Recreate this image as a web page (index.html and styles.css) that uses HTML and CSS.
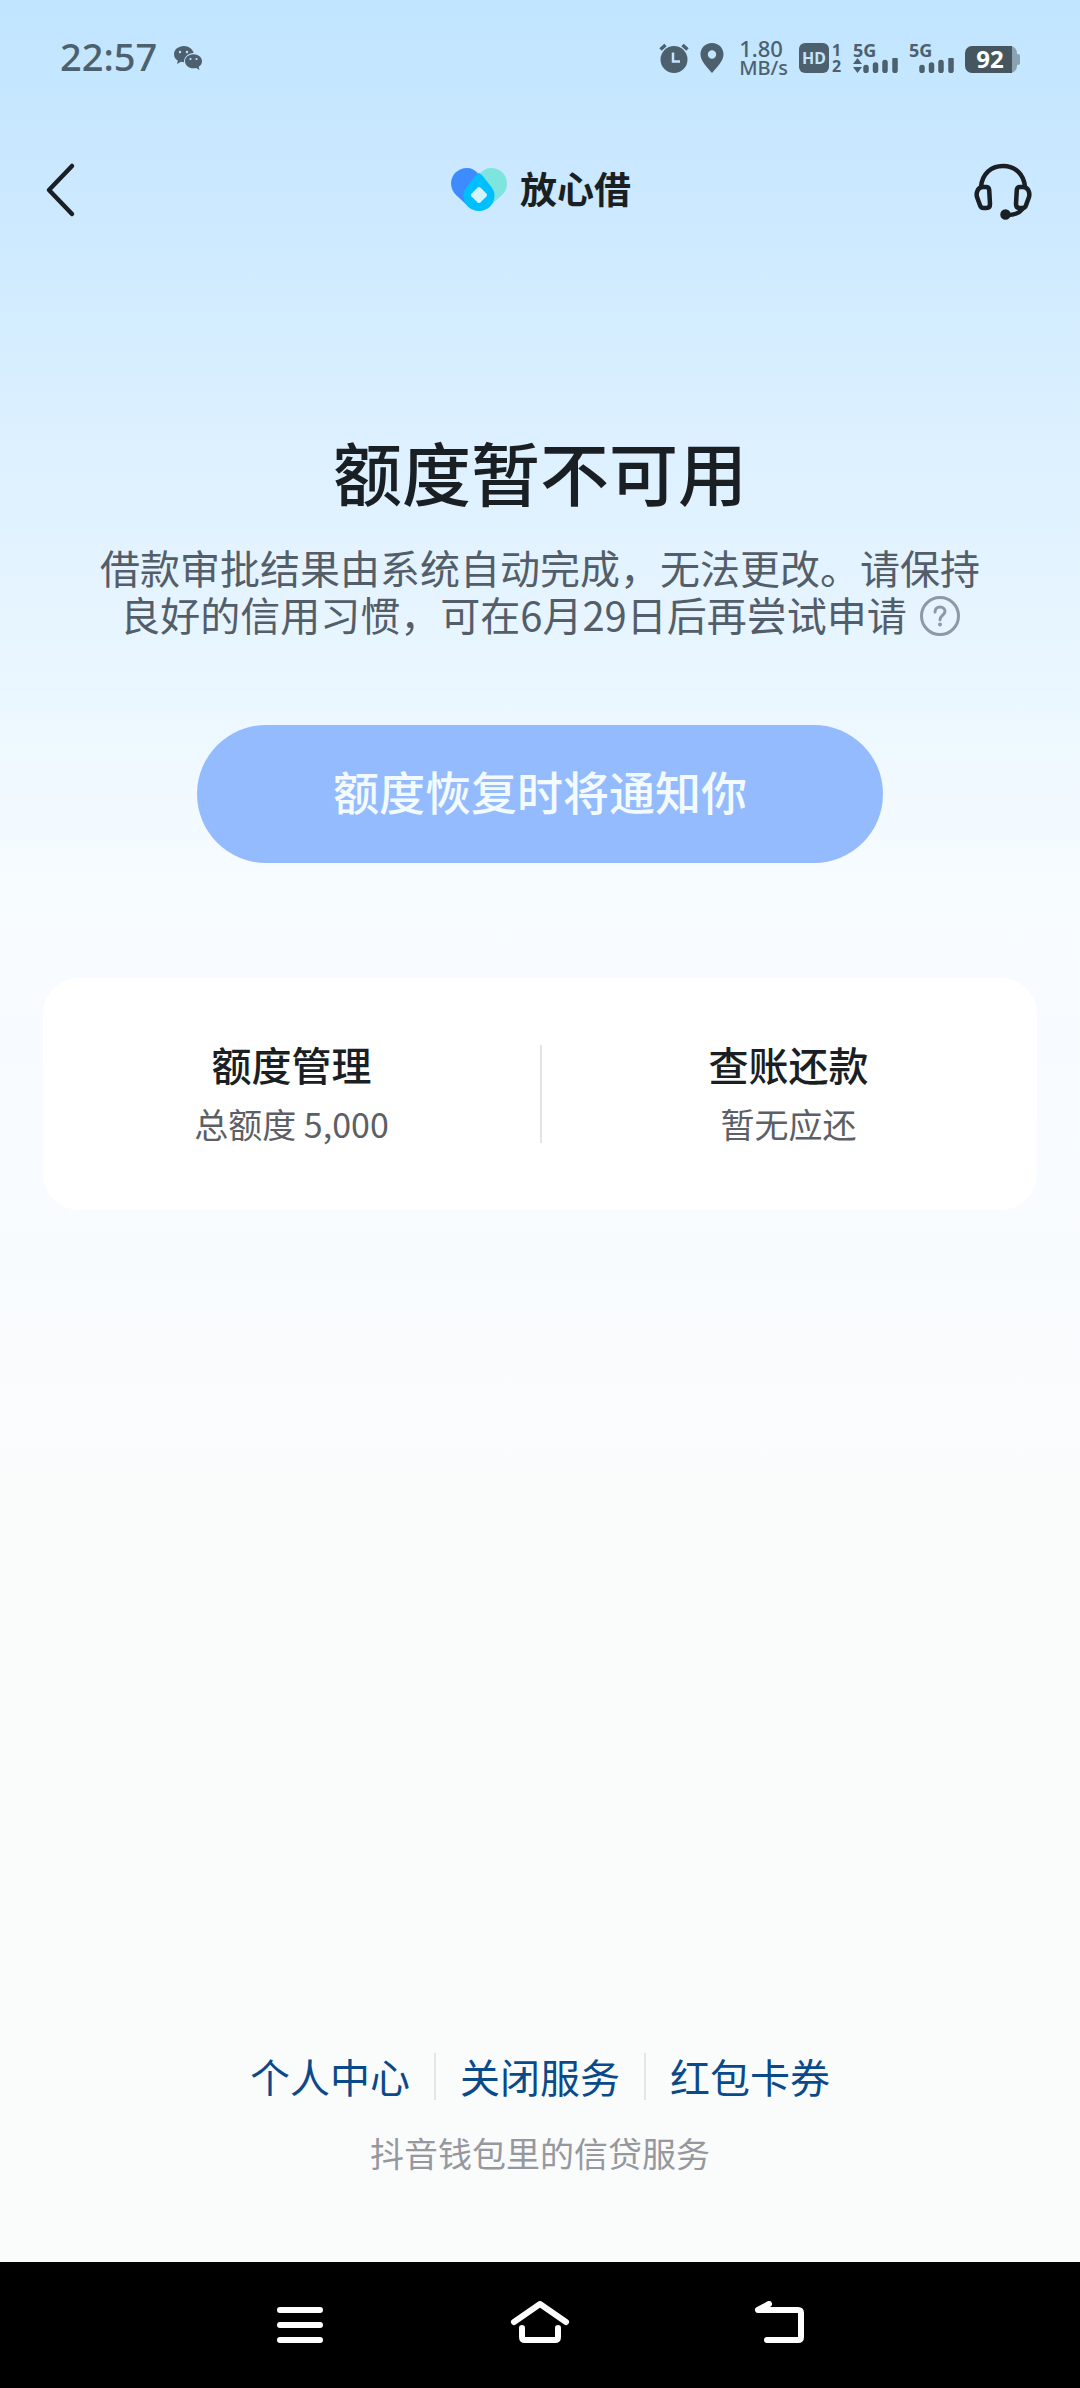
FILE: index.html
```html
<!DOCTYPE html>
<html lang="zh-CN">
<head>
<meta charset="utf-8">
<meta name="viewport" content="width=device-width, initial-scale=1">
<title>放心借</title>
<link rel="stylesheet" href="styles.css">
</head>
<body>
<div class="app">
  <div class="status">
    <div class="status-left">
      <span class="clock">22:57</span>
      <svg width="28" height="26" viewBox="0 0 28 26" aria-hidden="true">
        <path fill="currentColor" d="M10 1C4.500 1 0 4.600 0 9.200c0 2.700 1.500 5 3.800 6.400L3 19l4-2.200c1 .3 2 .4 3 .4C10 12 14 8 19.700 8 18.600 4 14.700 1 10 1z"/>
        <path fill="currentColor" d="M19.500 9.200c-4.800 0-8.500 3.100-8.500 7s3.700 7.100 8.500 7.100c1 0 2-.2 2.900-.4L25.500 25l-.8-3.200c2-1.300 3.300-3.300 3.300-5.600 0-3.900-3.700-7-8.500-7z"/>
        <g fill="#c5e5ff"><circle cx="6" cy="7" r="1.200"/><circle cx="13" cy="7" r="1.200"/><circle cx="16.500" cy="14" r="1.100"/><circle cx="22.500" cy="14" r="1.100"/></g>
      </svg>
    </div>
    <div class="status-right">
      <svg width="30" height="30" viewBox="0 0 30 30" aria-hidden="true">
        <circle cx="15" cy="16.500" r="13.500" fill="currentColor"/>
        <path d="M1.500 6.500L6.500 2M28.500 6.500L23.500 2" stroke="currentColor" stroke-width="3.500" fill="none"/>
        <path d="M14 9.500v9h7" stroke="#c5e5ff" stroke-width="2.500" fill="none"/>
      </svg>
      <svg width="24" height="30" viewBox="0 0 24 30" aria-hidden="true">
        <path fill="currentColor" fill-rule="evenodd" d="M12 0C5.200 0 .5 5 .5 11.300c0 7 7 13.500 11.500 18.700 4.500-5.200 11.500-11.700 11.500-18.700C23.500 5 18.800 0 12 0zm0 7.300a4.200 4.200 0 1 1 0 8.400 4.200 4.200 0 0 1 0-8.400z"/>
      </svg>
      <div class="speed"><span class="speed-value">1.80</span><span>MB/s</span></div>
      <div class="volte">
        <span class="hd">HD</span>
        <span class="sims"><span>1</span><span>2</span></span>
      </div>
      <div class="signal">
        <span class="net">5G</span>
        <svg width="45" height="15" viewBox="0 0 45 15" aria-hidden="true">
          <path fill="currentColor" d="M0 6l4.500-6L9 6zM0 9l4.500 6L9 9z"/>
          <path d="M13 9.500v3M22.500 7v5.500M32 4.500v8M42 1.500v11" stroke="currentColor" stroke-width="5.500" stroke-linecap="round"/>
        </svg>
      </div>
      <div class="signal">
        <span class="net">5G</span>
        <svg width="45" height="15" viewBox="0 0 45 15" aria-hidden="true">
          <path d="M13 9.500v3M22.500 7v5.500M32 4.500v8M42 1.500v11" stroke="currentColor" stroke-width="5.500" stroke-linecap="round"/>
        </svg>
      </div>
      <svg width="55" height="32" viewBox="0 -3 55 32">
        <rect x="2" y="1" width="50" height="27" rx="7" fill="#8ba2b2"/>
        <rect x="51" y="9" width="4" height="11" rx="2" fill="#8ba2b2"/>
        <path fill="#46565f" d="M7 1h40v27H7a7 7 0 0 1-7-7V8a7 7 0 0 1 7-7z"/>
        <text x="25" y="23" class="level" text-anchor="middle">92</text>
      </svg>
    </div>
  </div>

  <header class="header">
    <button class="icon-button" type="button" aria-label="返回">
      <svg width="64" height="60" viewBox="0 0 64 60"><path d="M28 6L5 30l23 24" fill="none" stroke="currentColor" stroke-width="4.500" stroke-linecap="round" stroke-linejoin="round"/></svg>
    </button>
    <div class="brand">
      <svg width="56" height="44" viewBox="0 0 56 44" aria-hidden="true">
        <path fill="#7de5de" d="M40 0c9 0 16 7 16 15.500 0 5-2 8.500-5 11.500L38 39 20 18l9-12.500C32 2 35.500 0 40 0z"/>
        <path fill="#3d8bff" d="M16 0C7 0 0 7 0 15.500 0 20 2 24 5 27l13 12 17-22-8-11.500C24 2 20.500 0 16 0z"/>
        <path fill="#00bfff" d="M28 5c2 1 3 2 4.500 4l7.500 9.500c2.300 3 3.500 5.500 3.500 9C43.500 36.500 36.500 43 28 43s-15.500-6.500-15.500-15.500c0-3.500 1.200-6 3.500-9L23.500 9C25 7 26 6 28 5z"/>
        <path fill="#d5f3ff" d="M26.600 19.600a2 2 0 0 1 2.800 0l6 6a2 2 0 0 1 0 2.800l-6 6a2 2 0 0 1-2.800 0l-6-6a2 2 0 0 1 0-2.800z"/>
      </svg>
      <span class="brand-name">放心借</span>
    </div>
    <button class="icon-button" type="button" aria-label="客服">
      <svg width="58" height="62" viewBox="0 -4 58 62" fill="none" stroke="currentColor" stroke-width="4.500" stroke-linecap="round" stroke-linejoin="round">
        <path d="M7 24C8 11 17 3 29 3s21 8 22 21"/>
        <path d="M9 24h3c2 0 3 1 3.200 3l.8 14c0 2.500-1 4-3.500 4H9.500c-2 0-2.800-.8-3.400-2.500L3 34c-.7-2.500-.5-4.500.8-7C5 25 6.500 24 9 24z"/>
        <path d="M49 24h-3c-2 0-3 1-3.200 3L42 41c0 2.500 1 4 3.500 4h3c2 0 2.800-.8 3.400-2.500L55 34c.7-2.500.5-4.500-.8-7C53 25 51.500 24 49 24z"/>
        <path d="M48.500 46c-3 4-9 6-16 6"/>
        <circle cx="31.500" cy="51.500" r="3" fill="currentColor"/>
      </svg>
    </button>
  </header>

  <main class="main">
    <h1 class="title">额度暂不可用</h1>
    <p class="desc">借款审批结果由系统自动完成，无法更改。请保持良好的信用习惯，可在6月29日后再尝试申请<button class="help" type="button" aria-label="说明"><svg width="40" height="40" viewBox="0 0 40 40"><circle cx="20" cy="20" r="18.500" fill="none" stroke="currentColor" stroke-width="3"/><path d="M15 16c0-3 2-5 5-5s5 2 5 4.600c0 3.400-5 4-5 8.200" fill="none" stroke="currentColor" stroke-width="3" stroke-linecap="round"/><circle cx="20" cy="28.500" r="2" fill="currentColor"/></svg></button></p>
    <button class="notify" type="button">额度恢复时将通知你</button>
    <section class="card">
      <a class="cell" href="#limit"><strong class="cell-title">额度管理</strong><span class="cell-note">总额度 5,000</span></a>
      <a class="cell" href="#bills"><strong class="cell-title">查账还款</strong><span class="cell-note">暂无应还</span></a>
    </section>
  </main>

  <footer class="footer">
    <nav class="links">
      <a href="#profile">个人中心</a>
      <a href="#close">关闭服务</a>
      <a href="#coupons">红包卡券</a>
    </nav>
    <p class="tagline">抖音钱包里的信贷服务</p>
  </footer>

  <div class="system-nav">
    <button type="button" aria-label="菜单"><svg width="60" height="48" viewBox="0 0 60 48"><path d="M10 9h40M10 24h40M10 39h40"/></svg></button>
    <button type="button" aria-label="主页"><svg width="60" height="48" viewBox="0 0 60 48"><path d="M4 21L30 3l26 18M12 27v9q0 3 3 3h30q3 0 3-3v-9"/></svg></button>
    <button type="button" aria-label="返回上一级"><svg width="60" height="48" viewBox="0 0 60 48"><path d="M19 3L8 9h40q3 0 3 3v24q0 3-3 3H17"/></svg></button>
  </div>
</div>
</body>
</html>
```
FILE: styles.css
```css
* {
  box-sizing: border-box;
}

body {
  margin: 0;
  font-family: "Noto Sans CJK SC", "Noto Sans", sans-serif;
  color: #1a1f24;
}

button {
  margin: 0;
  padding: 0;
  border: 0;
  background: none;
  color: inherit;
  font: inherit;
}

a {
  color: inherit;
  text-decoration: none;
}

svg {
  display: block;
}

.app {
  display: flex;
  flex-direction: column;
  min-height: 100vh;
  background: linear-gradient(#c1e5ff 0%, #cce9ff 9%, #dcf0ff 18%, #e9f6ff 28%, #f7fcff 37%, #f8fbff 50%, #fafcfc 62%, #fafcfc 100%);
}

.status {
  display: flex;
  justify-content: space-between;
  align-items: center;
  height: 116px;
  padding: 0 60px;
  color: #4d606e;
  font-family: "Noto Sans", sans-serif;
}

.status-left,
.status-right {
  display: flex;
  align-items: center;
}

.status-left {
  gap: 17px;
}

.status-right {
  gap: 11px;
}

.clock {
  padding-bottom: 4px;
  font-size: 38px;
  font-weight: 500;
}

.speed {
  display: flex;
  flex-direction: column;
  margin-left: 4px;
  font-size: 20px;
  font-weight: 500;
  line-height: 19px;
}

.speed-value {
  font-size: 22px;
}

.volte {
  display: flex;
  align-items: center;
  gap: 3px;
  width: 43px;
  font-weight: 700;
}

.hd {
  width: 30px;
  border-radius: 6px;
  background: #4d606e;
  color: #c5e5ff;
  font-size: 16px;
  line-height: 30px;
  text-align: center;
}

.sims {
  display: flex;
  flex-direction: column;
  font-size: 16px;
  line-height: 16px;
}

.signal {
  display: flex;
  flex-direction: column;
  width: 45px;
}

.net {
  font-size: 18px;
  font-weight: 700;
  line-height: 15px;
}

.level {
  fill: #ffffff;
  font-family: "Noto Sans", sans-serif;
  font-size: 24px;
  font-weight: 700;
}

.header {
  display: flex;
  justify-content: space-between;
  align-items: center;
  height: 148px;
  padding: 0 48px 0 44px;
}

.icon-button {
  display: flex;
}

.brand {
  display: flex;
  align-items: center;
  gap: 13px;
}

.brand-name {
  padding-bottom: 4px;
  font-size: 37px;
  font-weight: 700;
  line-height: 48px;
}

.main {
  display: flex;
  flex-direction: column;
  align-items: center;
  padding: 167px 43px 0;
}

.title {
  margin: 0;
  font-size: 69px;
  font-weight: 500;
  line-height: 80px;
}

.desc {
  margin: 33px 0 0;
  padding: 0 48px;
  color: #545e69;
  font-size: 40px;
  line-height: 47px;
  text-align: center;
}

.help {
  margin-left: 13px;
  color: #8d99a4;
  vertical-align: -5px;
}

.notify {
  width: 69%;
  margin-top: 87px;
  padding-bottom: 8px;
  border-radius: 69px;
  background: #95bbff;
  color: #f3fbff;
  font-size: 46px;
  font-weight: 500;
  line-height: 130px;
}

.card {
  display: flex;
  align-self: stretch;
  margin-top: 115px;
  padding: 56px 0;
  border-radius: 36px;
  background: #ffffff;
}

.cell {
  display: flex;
  flex: 1;
  flex-direction: column;
  align-items: center;
}

.cell + .cell {
  background: linear-gradient(#e3e4e6, #e3e4e6) left center / 2px 98px no-repeat;
}

.cell-title {
  font-size: 40px;
  font-weight: 500;
  line-height: 60px;
}

.cell-note {
  color: #5c5f66;
  font-size: 34px;
  line-height: 60px;
}

.footer {
  margin-top: auto;
  padding: 48px 43px 85px;
  text-align: center;
}

.links {
  display: flex;
  justify-content: center;
  color: #0b4a8a;
  font-size: 40px;
  line-height: 47px;
}

.links a {
  padding: 0 24px;
}

.links a + a {
  border-left: 2px solid #e3e6e8;
}

.tagline {
  margin: 29px 0 0;
  color: #96989e;
  font-size: 34px;
  line-height: 48px;
}

.system-nav {
  display: flex;
  justify-content: center;
  align-items: center;
  gap: 180px;
  height: 126px;
  background: #000000;
}

.system-nav path {
  fill: none;
  stroke: #ffffff;
  stroke-width: 6;
  stroke-linecap: round;
  stroke-linejoin: round;
}
```
